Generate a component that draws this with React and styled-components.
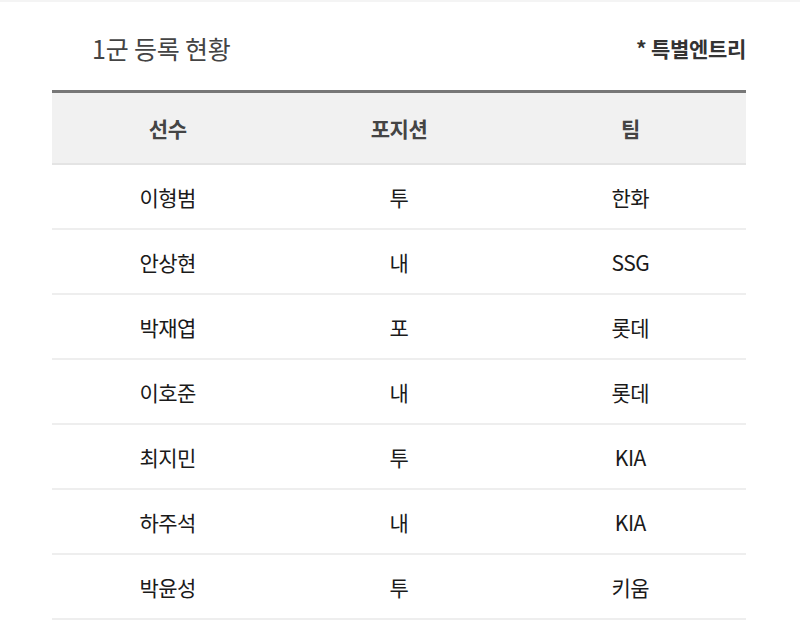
import React from 'react'
import styled, { createGlobalStyle } from 'styled-components'

const GlobalStyle = createGlobalStyle`
  html, body {
    margin: 0;
    padding: 0;
    background: #fff;
    font-family: "Noto Sans CJK KR", "Noto Sans", sans-serif;
  }
`

const Page = styled.div`
  width: 800px;
  height: 623px;
  overflow: hidden;
  border-top: 2px solid #f4f4f4;
  box-sizing: border-box;
`

const Section = styled.div`
  width: 694px;
  margin: 0 0 0 52px;
`

const TitleBar = styled.div`
  display: flex;
  justify-content: space-between;
  align-items: center;
  height: 88px;
  padding: 4px 0 0 40px;
  box-sizing: border-box;
`

const Title = styled.h2`
  margin: 0;
  font-size: 25px;
  font-weight: 400;
  color: #444;
  letter-spacing: -0.2px;
`

const Note = styled.span`
  font-size: 21px;
  font-weight: 700;
  color: #333;
  letter-spacing: -0.3px;
`

const Table = styled.div`
  border-top: 3px solid #777;
`

const Row = styled.div`
  display: grid;
  grid-template-columns: repeat(3, 1fr);
  align-items: center;
  height: ${p => (p.$head ? '70px' : '63px')};
  background: ${p => (p.$head ? '#f1f1f1' : '#fff')};
  border-bottom: 2px solid ${p => (p.$head ? '#e4e4e4' : '#eeeeee')};
`

const Cell = styled.div`
  text-align: center;
  font-size: ${p => (p.$head ? '21px' : '21px')};
  font-weight: ${p => (p.$head ? 700 : 400)};
  color: ${p => (p.$head ? '#444' : '#1a1a1a')};
  letter-spacing: -0.5px;
`

const players = [
  ['이형범', '투', '한화'],
  ['안상현', '내', 'SSG'],
  ['박재엽', '포', '롯데'],
  ['이호준', '내', '롯데'],
  ['최지민', '투', 'KIA'],
  ['하주석', '내', 'KIA'],
  ['박윤성', '투', '키움'],
]

export default function App() {
  return (
    <Page>
      <GlobalStyle />
      <Section>
        <TitleBar>
          <Title>1군 등록 현황</Title>
          <Note>* 특별엔트리</Note>
        </TitleBar>
        <Table>
          <Row $head>
            <Cell $head>선수</Cell>
            <Cell $head>포지션</Cell>
            <Cell $head>팀</Cell>
          </Row>
          {players.map((p, i) => (
            <Row key={i}>
              {p.map((v, j) => (
                <Cell key={j}>{v}</Cell>
              ))}
            </Row>
          ))}
        </Table>
      </Section>
    </Page>
  )
}
